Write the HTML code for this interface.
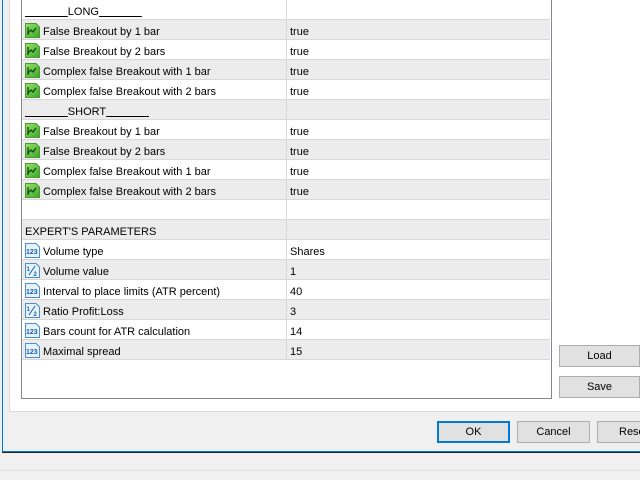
<!DOCTYPE html>
<html><head><style>
*{margin:0;padding:0;box-sizing:border-box}
body{width:640px;height:480px;background:#f0f0f0;position:relative;overflow:hidden;font-family:"Liberation Sans",sans-serif;font-size:11px;color:#000}
.a{position:absolute}
.row{position:absolute;left:22px;width:528px;height:20px;border-bottom:1px solid #d8d8d8}
.row.g{background:#ececec}
.row .n{position:absolute;left:3px;top:6px;white-space:nowrap}
.row .n.i{left:21px}
.row .v{position:absolute;left:264px;top:0;height:20px;border-left:1px solid #d8d8d8;padding-left:3px;padding-top:6px;width:264px}
.ic{position:absolute;left:3px;top:3px;width:15px;height:15px}
.btn{position:absolute;background:#e1e1e1;border:1px solid #adadad;text-align:center;font-size:11px;line-height:20px}
</style></head><body>
<div class="a" style="left:2px;top:0;width:1px;height:452px;background:#0078d7"></div>
<div class="a" style="left:2px;top:451px;width:638px;height:1px;background:#0078d7"></div>
<div class="a" style="left:2px;top:452px;width:638px;height:1px;background:#222"></div>
<div class="a" style="left:0;top:470px;width:640px;height:1px;background:#e0e0e0"></div>
<div class="a" style="left:9px;top:0;width:631px;height:412px;background:#fff;border-left:1px solid #d9d9d9;border-bottom:1px solid #d9d9d9"></div>
<div class="a" style="left:21px;top:-1px;width:531px;height:400px;background:#fff;border:1px solid #828790"></div>
<div id="g"></div>
<div class="btn" style="left:559px;top:345px;width:81px;height:22px">Load</div>
<div class="btn" style="left:559px;top:376px;width:81px;height:22px">Save</div>
<div class="btn" style="left:437px;top:421px;width:73px;height:22px;border:2px solid #0078d7;line-height:18px">OK</div>
<div class="btn" style="left:517px;top:421px;width:73px;height:22px">Cancel</div>
<div class="btn" style="left:597px;top:421px;width:60px;height:22px;text-align:left;padding-left:21px">Reset</div>
<script>
var G='<svg class="ic" viewBox="0 0 15 15"><defs><linearGradient id="gg" x1="0" y1="0" x2="1" y2="1"><stop offset="0" stop-color="#9be36a"/><stop offset="1" stop-color="#3aa52a"/></linearGradient></defs><path d="M0.5 0.5H11L14.5 4V14.5H0.5Z" fill="url(#gg)" stroke="#4a9a30"/><path d="M3 12V4M3 10L6 7L8 9L11 5" stroke="#0a4a10" fill="none" stroke-width="1.3"/></svg>';
var B='<svg class="ic" viewBox="0 0 15 15"><path d="M0.5 0.5H11L14.5 4V14.5H0.5Z" fill="#e6f2fc" stroke="#4a8fd0"/><text x="1" y="11" font-size="7" font-family="Liberation Sans" fill="#1a5fb0" font-weight="bold">123</text></svg>';
var H='<svg class="ic" viewBox="0 0 15 15"><path d="M0.5 0.5H11L14.5 4V14.5H0.5Z" fill="#e6f2fc" stroke="#4a8fd0"/><text x="1.5" y="8" font-size="6" font-family="Liberation Sans" fill="#1a5fb0" font-weight="bold">1</text><path d="M4 12L10 3" stroke="#1a5fb0"/><text x="8.5" y="13" font-size="6" font-family="Liberation Sans" fill="#1a5fb0" font-weight="bold">2</text></svg>';
var rows=[["________LONG________","","",],["False Breakout by 1 bar","true",G],["False Breakout by 2 bars","true",G],["Complex false Breakout with 1 bar","true",G],["Complex false Breakout with 2 bars","true",G],["________SHORT________","",""],["False Breakout by 1 bar","true",G],["False Breakout by 2 bars","true",G],["Complex false Breakout with 1 bar","true",G],["Complex false Breakout with 2 bars","true",G],["","",""],["EXPERT'S PARAMETERS","",""],["Volume type","Shares",B],["Volume value","1",H],["Interval to place limits (ATR percent)","40",B],["Ratio Profit:Loss","3",H],["Bars count for ATR calculation","14",B],["Maximal spread","15",B]];
var sp='&nbsp;'.repeat(14);
var h='';rows.forEach(function(r,i){var t=r[0].replace(/_+(LONG|SHORT)_+/,function(m,w){return '<u>'+sp+'</u>'+w+'<u>'+sp+'</u>'});
h+='<div class="row'+(i%2?' g':'')+'" style="top:'+(i*20)+'px">'+r[2]+'<span class="n'+(r[2]?' i':'')+'">'+t+'</span><div class="v">'+r[1]+'</div></div>';});
document.getElementById('g').innerHTML=h;
</script>
</body></html>
